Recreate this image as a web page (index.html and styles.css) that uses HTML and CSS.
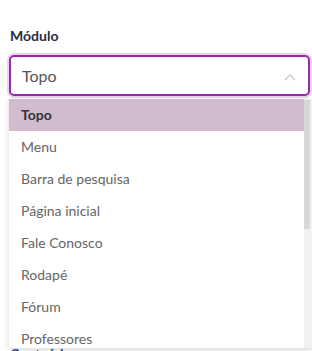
FILE: index.html
```html
<!DOCTYPE html>
<html lang="pt">
<head>
<meta charset="utf-8">
<link rel="stylesheet" href="styles.css">
</head>
<body>
<div class="page">
  <div class="field">
    <div class="label">Módulo</div>
    <div class="control">
      <div class="select">
        <span class="value">Topo</span>
        <svg class="chev" width="12" height="8" viewBox="0 0 12 8"><path d="M1 7 L6 2 L11 7" fill="none" stroke="#c8c8c8" stroke-width="1.3"/></svg>
      </div>
      <div class="menu">
        <ul class="list">
          <li class="item active">Topo</li>
          <li class="item">Menu</li>
          <li class="item">Barra de pesquisa</li>
          <li class="item">Página inicial</li>
          <li class="item">Fale Conosco</li>
          <li class="item">Rodapé</li>
          <li class="item">Fórum</li>
          <li class="item">Professores</li>
          <li class="item">Cursos</li>
          <li class="item">Blog</li>
        </ul>
        <div class="track"><div class="thumb"></div></div>
      </div>
    </div>
  </div>
  <div class="spacer"></div>
  <div class="field">
    <div class="label label2">Conteúdo</div>
  </div>
</div>
</body>
</html>
```
FILE: styles.css
```css
* { box-sizing: border-box; }
html, body { margin: 0; padding: 0; background: #fff; }
body { font-family: Lato, "Noto Sans", sans-serif; overflow: hidden; }
.page { padding: 26px 2px 0 9px; }
.label {
  font-size: 14px;
  font-weight: 700;
  color: #2a2c45;
  line-height: 20px;
  padding-left: 1px;
  margin-bottom: 9px;
}
.control { position: relative; }
.select {
  height: 41px;
  width: 301px;
  border: 2px solid #9a28ad;
  border-radius: 5px;
  box-shadow: 0 0 0 2px rgba(170, 80, 190, 0.25);
  display: flex;
  align-items: center;
  justify-content: space-between;
  padding: 0 12px 0 11px;
}
.value { font-size: 16px; color: #555; }
.chev { margin-top: 3px; }
.menu {
  position: absolute;
  top: 44px;
  left: 0;
  width: 303px;
  height: 249px;
  background: #fff;
  overflow: hidden;
  box-shadow: 0 2px 6px rgba(0, 0, 0, 0.16);
  z-index: 2;
  display: flex;
}
.list {
  flex: 1;
  margin: 0;
  padding: 0;
  list-style: none;
}
.track {
  width: 8px;
  flex: none;
  background: #f1f1f1;
  padding: 1px 2px 0 0;
}
.thumb { height: 129px; background: #d8d8d8; }
.item {
  height: 32px;
  line-height: 32px;
  padding-left: 12px;
  font-size: 14px;
  color: #666;
  white-space: nowrap;
}
.item.active { background: #d1bbd0; color: #333; font-weight: 700; }
.spacer { height: 248px; }
.label2 { color: #3a3f8a; }
```
